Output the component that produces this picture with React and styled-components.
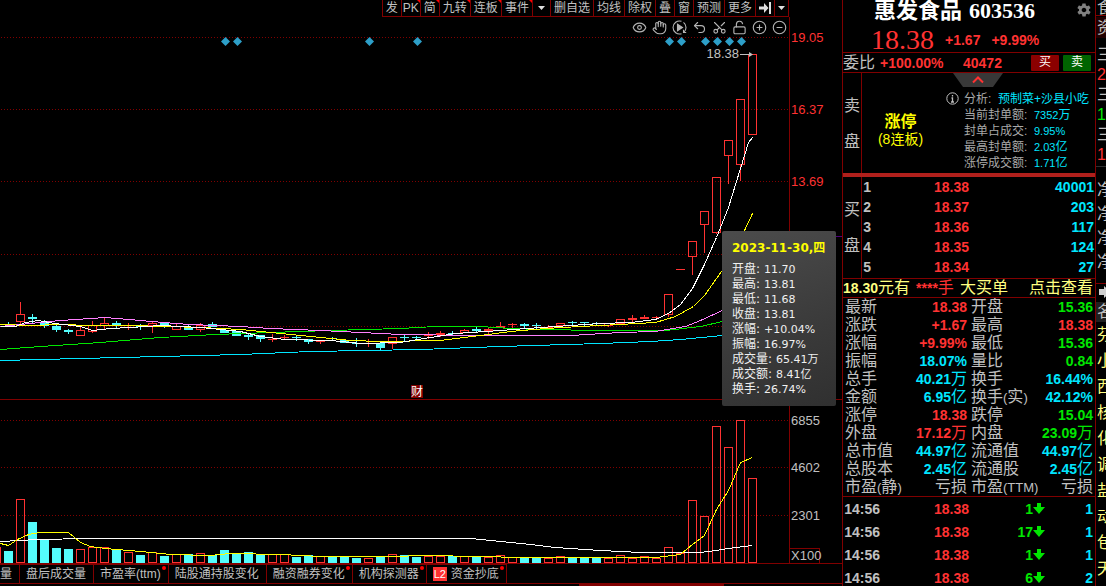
import React from 'react';
import styled, { createGlobalStyle } from 'styled-components';
import { Eye, Hand, Undo2, Scissors, LockOpen, CirclePlus, CircleMinus } from 'lucide-react';
import { IoMdSettings } from 'react-icons/io';

const RED = '#ff3232';
const GREEN = '#00e600';
const CYAN = '#00e6ff';
const AQUA = '#54fcfc';
const YELLOW = '#ffff00';
const PALE = '#ffff80';
const GRAY = '#c0c0c0';
const LINE = '#800000';

const GlobalStyle = createGlobalStyle`
    * {
        box-sizing: border-box;
    }
    body {
        margin: 0;
        background: #000;
        color: ${GRAY};
        font-family: 'Liberation Sans', 'Noto Sans CJK SC', sans-serif;
        font-size: 12px;
        overflow: hidden;
    }
    button {
        font-family: inherit;
        font-size: inherit;
        color: inherit;
        background: none;
        border: none;
        padding: 0;
        cursor: pointer;
    }
    table {
        border-collapse: collapse;
        table-layout: fixed;
        width: 100%;
    }
    th, td {
        padding: 0;
        font-weight: inherit;
        text-align: left;
        white-space: nowrap;
    }
`

const Page = styled.div`
    display: grid;
    grid-template-columns: 1fr 254px 10px;
    height: 100vh;
    overflow: hidden;
`

const Main = styled.main`
    display: flex;
    flex-direction: column;
    min-width: 0;
`

const Toolbar = styled.nav`
    display: flex;
    justify-content: flex-end;
    height: 17px;
    padding-right: 53px;
`

const ToolButton = styled.button`
    position: relative;
    display: flex;
    align-items: center;
    justify-content: center;
    min-width: ${props => props.$wide || 19}px;
    padding: 0 ${props => props.$tight ? 1 : 3}px;
    line-height: 14px;
    border-right: 1px solid ${LINE};
    border-bottom: 1px solid ${LINE};
    white-space: nowrap;
    &:first-child {
        border-left: 1px solid ${LINE};
    }
    &::after {
        content: '';
        display: ${props => props.$hot ? 'block' : 'none'};
        position: absolute;
        top: 0;
        right: 0;
        border-top: 3px solid #ff0000;
        border-left: 3px solid transparent;
    }
`

const ChartArea = styled.section`
    position: relative;
    svg.chart {
        display: block;
        width: 100%;
        height: auto;
    }
`

const ChartTools = styled.div`
    position: absolute;
    top: 0;
    right: 53px;
    display: flex;
    height: 20px;
`

const ChartTool = styled.button`
    display: flex;
    align-items: center;
    justify-content: center;
    width: 20px;
    color: #b4b4b4;
    .lucide-scissors {
        transform: rotate(-90deg);
    }
`

const Tooltip = styled.div`
    position: absolute;
    top: 214px;
    right: 6px;
    width: 114px;
    height: 175px;
    padding: 10px 0 0 10px;
    border-radius: 2px;
    background: linear-gradient(160deg, #4c4c4c, #3a3a3a 60%, #303030);
    color: #f0f0f0;
    font-family: 'DejaVu Sans', 'Noto Sans CJK SC', sans-serif;
    white-space: nowrap;
`

const TooltipTitle = styled.div`
    height: 21px;
    line-height: 14px;
    color: ${YELLOW};
    font-weight: bold;
`

const TooltipRow = styled.div`
    display: flex;
    gap: 4px;
    height: 15px;
    line-height: 15px;
    dt {
        font-size: 12px;
    }
    dd {
        margin: 0;
        font-size: 11px;
    }
`

const TooltipList = styled.dl`
    margin: 0;
`

const Tabs = styled.nav`
    display: flex;
    height: 21px;
    border-top: 1px solid ${LINE};
    border-bottom: 1px solid ${LINE};
`

const Tab = styled.button`
    position: relative;
    display: flex;
    align-items: center;
    gap: 4px;
    padding: 0 7px 0 ${props => props.$cut ? 0 : 6}px;
    line-height: 18px;
    border-top: 1px solid ${LINE};
    border-right: 1px solid ${LINE};
    white-space: nowrap;
    &::after {
        content: '';
        display: ${props => props.$dot ? 'block' : 'none'};
        position: absolute;
        top: 1px;
        right: 2px;
        width: 4px;
        height: 4px;
        border-radius: 50%;
        background: #ff0000;
    }
`

const Level2 = styled.span`
    width: 14px;
    height: 14px;
    line-height: 14px;
    background: ${RED};
    color: #fff;
    font-size: 11px;
    text-align: center;
`

const Strip = styled.div`
    width: 145px;
    height: 2px;
    margin: 0 118px 0 auto;
    background: ${LINE};
`

const Panel = styled.aside`
    border-left: 1px solid ${LINE};
    border-right: 1px solid ${LINE};
    overflow: hidden;
    min-height: 0;
`

const Head = styled.header`
    position: relative;
    height: 53px;
    padding: 0 28px;
    border-bottom: 1px solid ${LINE};
    white-space: nowrap;
`

const Name = styled.h1`
    display: flex;
    gap: 7px;
    height: 26px;
    margin: 0;
    padding-left: 3px;
    font: bold 22px/21px 'Liberation Serif', 'Noto Sans CJK SC', serif;
    color: #fff;
`

const Price = styled.div`
    display: flex;
    align-items: center;
    gap: 11px;
    height: 28px;
    color: ${RED};
    font-size: 14px;
    font-weight: bold;
    strong {
        font: 28px/26px 'Liberation Serif', serif;
    }
`

const Settings = styled.button`
    position: absolute;
    top: 2px;
    right: 3px;
    display: flex;
    color: #808080;
`

const Han = styled.span`
    font-size: 16px;
    font-weight: normal;
    line-height: 0;
`

const Commission = styled.div`
    display: flex;
    align-items: center;
    height: 20px;
    border-bottom: 1px solid ${LINE};
    color: ${RED};
    font-size: 14px;
    font-weight: bold;
    line-height: 18px;
`

const CommissionLabel = styled.span`
    width: 37px;
    color: ${GRAY};
`

const CommissionRate = styled.span`
    width: 83px;
`

const TradeButton = styled.button`
    width: 28px;
    height: 16px;
    margin-right: 4px;
    border-radius: 1px;
    background: ${props => props.$sell ? '#006400' : '#8b0000'};
    color: #fff;
    font-size: 12px;
    line-height: 15px;
    &:first-of-type {
        margin-left: auto;
    }
`

const Book = styled.section`
    display: grid;
    grid-template-columns: 19px 1fr;
    height: ${props => props.$height}px;
`

const Side = styled.div`
    display: flex;
    flex-direction: column;
    align-items: center;
    justify-content: center;
    gap: 20px;
    padding-top: 1px;
    border-right: 1px solid ${LINE};
    font-size: 16px;
    line-height: 16px;
`

const Sell = styled.div`
    position: relative;
    display: flex;
`

const Fold = styled.button`
    position: absolute;
    top: 0;
    left: 91px;
    display: flex;
`

const LimitUp = styled.div`
    width: 77px;
    padding-top: 40px;
    color: ${YELLOW};
    text-align: center;
    strong {
        display: block;
        font-size: 16px;
        line-height: 18px;
    }
    span {
        font-size: 14px;
        line-height: 17px;
    }
`

const InfoMark = styled.div`
    width: 25px;
    padding: 19px 0 0 7px;
`

const Analysis = styled.dl`
    margin: 0;
    padding-top: 18px;
    div {
        display: flex;
        height: 16px;
        line-height: 16px;
        white-space: nowrap;
    }
    dt {
        min-width: 34px;
        color: #a8a8a8;
    }
    dd {
        margin: 0;
        color: ${CYAN};
        font-size: 11px;
    }
    span {
        font-size: 12px;
    }
`

const WideLabel = styled.dt`
    width: 70px;
`

const Divider = styled.div`
    height: 4px;
    background: #b0201c;
`

const Data = styled.table`
    align-self: start;
    font-size: 14px;
    font-weight: bold;
    line-height: 16px;
    tr {
        height: ${props => props.$row}px;
    }
`

const Cell = styled.td`
    color: ${props => props.$color || GRAY};
    && {
        text-align: ${props => props.$right ? 'right' : 'left'};
        padding-right: ${props => props.$pad || 0}px;
    }
`

const Label = styled.th`
    && {
        padding: 2px 0 0 2px;
    }
    font-size: 13px;
    font-weight: normal;
`

const BigOrder = styled.div`
    display: flex;
    align-items: center;
    height: 20px;
    border-top: 1px solid ${LINE};
    border-bottom: 1px solid ${LINE};
    color: ${PALE};
    font-size: 14px;
    font-weight: bold;
    line-height: 18px;
    white-space: nowrap;
    em {
        margin: 0 6px;
        color: ${RED};
        font-style: normal;
    }
    button {
        margin-left: auto;
        padding-right: 2px;
    }
`

const Quote = styled.section`
    border-bottom: 1px solid ${LINE};
`

const Rail = styled.aside`
    overflow: hidden;
    font-size: 16px;
`

const RailGroup = styled.ul`
    list-style: none;
    margin: 0;
    padding: ${props => props.$pad || '0'};
    border-bottom: ${props => props.$line ? `1px solid ${props.$line}` : 'none'};
`

const RailItem = styled.li`
    width: 20px;
    height: ${props => props.$height}px;
    line-height: ${props => props.$height}px;
    padding-left: 1px;
    color: ${props => props.$color || GRAY};
    background: ${props => props.$back || 'none'};
`

const tools = [
    { text: '发' },
    { text: 'PK', hot: true, tight: true },
    { text: '简', hot: true },
    { text: '九转', hot: true },
    { text: '连板', hot: true },
    { text: '事件', hot: true },
    { icon: 'down', label: '事件列表', wide: 18 },
    { text: '删自选' },
    { text: '均线' },
    { text: '除权' },
    { text: '叠' },
    { text: '窗' },
    { text: '预测' },
    { text: '更多' },
    { icon: 'end', label: '移到最后' },
    { icon: 'down', label: '菜单', wide: 14 },
]

const tabs = [
    { text: '量', cut: true },
    { text: '盘后成交量' },
    { text: '市盈率(ttm)', dot: true },
    { text: '陆股通持股变化' },
    { text: '融资融券变化', dot: true },
    { text: '机构探测器', dot: true },
    { text: '资金抄底', dot: true, level2: true },
]

// up day, high, body top, body bottom, low, top of the volume bar
const candles = [
    [0, 322, 324, 325, 326, 551],
    [1, 302, 314, 321, 324, 499],
    [0, 314, 317, 319, 322, 522],
    [0, 320, 322, 326, 327, 540],
    [0, 324, 326, 330, 331, 548],
    [0, 329, 330, 332, 333, 549],
    [1, 327, 330, 335, 335, 549],
    [1, 321, 325, 331, 332, 547],
    [1, 318, 323, 325, 328, 547],
    [0, 321, 323, 326, 327, 550],
    [1, 323, 325, 325, 329, 552],
    [0, 324, 326, 327, 329, 555],
    [1, 321, 323, 325, 332, 552],
    [0, 323, 323, 326, 327, 556],
    [1, 324, 326, 329, 329, 554],
    [0, 325, 327, 330, 330, 554],
    [1, 323, 325, 329, 331, 553],
    [0, 322, 324, 327, 327, 555],
    [0, 328, 330, 333, 333, 550],
    [0, 331, 331, 336, 336, 553],
    [0, 333, 335, 337, 339, 552],
    [0, 335, 335, 339, 341, 555],
    [1, 334, 339, 339, 341, 554],
    [1, 335, 337, 337, 338, 554],
    [0, 335, 337, 338, 340, 557],
    [0, 339, 339, 342, 343, 555],
    [1, 340, 340, 341, 343, 556],
    [0, 337, 338, 339, 340, 557],
    [0, 340, 340, 343, 343, 557],
    [0, 338, 343, 344, 346, 558],
    [1, 339, 343, 343, 346, 558],
    [0, 341, 343, 348, 349, 557],
    [1, 337, 337, 343, 348, 554],
    [0, 335, 337, 338, 340, 555],
    [0, 336, 337, 338, 339, 557],
    [1, 332, 335, 335, 338, 556],
    [1, 331, 333, 334, 336, 556],
    [0, 331, 333, 334, 335, 556],
    [1, 329, 330, 332, 332, 556],
    [0, 327, 329, 331, 332, 557],
    [1, 328, 329, 330, 333, 557],
    [1, 322, 326, 327, 327, 555],
    [1, 323, 324, 324, 328, 557],
    [0, 323, 324, 326, 327, 558],
    [0, 323, 325, 326, 328, 558],
    [1, 325, 327, 327, 329, 558],
    [1, 323, 323, 325, 327, 556],
    [0, 321, 322, 323, 325, 558],
    [0, 322, 322, 323, 325, 558],
    [0, 322, 323, 324, 325, 558],
    [1, 323, 323, 325, 326, 558],
    [1, 319, 319, 323, 323, 555],
    [1, 315, 318, 319, 322, 558],
    [1, 315, 317, 318, 318, 556],
    [1, 316, 317, 317, 319, 558],
    [1, 294, 294, 314, 316, 547],
    [1, 269, 269, 269, 269, 553],
    [1, 241, 241, 256, 274, 500],
    [1, 211, 211, 224, 252, 516],
    [1, 177, 177, 232, 233, 426],
    [1, 140, 140, 155, 183, 447],
    [1, 99, 99, 164, 180, 420],
    [1, 54, 54, 134, 134, 478],
]

const averages = [
    ['#00e6ff', '0,360 80,358 160,356 240,354 310,351 420,349 500,346 600,343 650,341 680,339 722,335'],
    ['#00e600', '0,349 40,346 100,342 160,337 215,334 270,332 330,330 400,328 435,326 480,326 510,328 540,329 600,330 665,330 700,326 722,321'],
    ['#ff80ff', '0,326 30,323 60,320 105,317 140,320 175,323 190,324 240,326 270,328 320,330 360,332 400,334 470,335 570,335 620,332 655,331 685,326 700,320 722,310'],
    [YELLOW, '0,324 30,325 60,324 90,325 130,325 200,327 240,329 270,332 310,336 350,340 380,341 440,340 480,335 510,331 545,328 580,326 600,325 655,322 675,316 693,306 704,295 716,278 728,261 744,230 752,213'],
    ['#ffffff', '0,326 15,326 25,322 38,320 54,323 80,326 92,330 110,328 130,327 160,325 200,327 240,331 260,336 285,339 330,340 360,343 400,342 430,337 455,333 500,330 540,327 570,325 600,323 630,322 655,319 668,313 680,304 692,288 704,264 716,237 728,207 740,168 748,142 752,137'],
    ['#ffffff', '0,541 20,540 35,539 90,538 470,538 490,540 530,544 555,547 600,550 640,552 700,552 715,550 735,547 752,545'],
    [YELLOW, '0,543 8,545 17,539 28,534 40,532 68,532 80,542 90,546 105,548 140,551 170,554 210,555 230,553 280,554 320,556 390,556 425,555 480,556 520,557 655,557 680,554 692,544 704,535 716,509 728,490 740,462 752,457'],
]

const events = [225, 237, 369, 417, 669, 681, 705, 717, 729, 741]

const axis = [
    [38, '19.05', RED],
    [110, '16.37', RED],
    [182, '13.69', RED],
    [421, '6855', GRAY],
    [468, '4602', GRAY],
    [516, '2301', GRAY],
    [556, 'X100', GRAY],
]

const dayInfo = [
    ['开盘', '11.70'],
    ['最高', '13.81'],
    ['最低', '11.68'],
    ['收盘', '13.81'],
    ['涨幅', '+10.04%'],
    ['振幅', '16.97%'],
    ['成交量', '65.41万'],
    ['成交额', '8.41亿'],
    ['换手', '26.74%'],
]

const analysis = [
    ['当前封单额:', '7352万'],
    ['封单占成交:', '9.95%'],
    ['最高封单额:', '2.03亿'],
    ['涨停成交额:', '1.71亿'],
]

const bids = [
    ['1', '18.38', '40001'],
    ['2', '18.37', '203'],
    ['3', '18.36', '117'],
    ['4', '18.35', '124'],
    ['5', '18.34', '27'],
]

const quotes = [
    ['最新', '18.38', RED, '开盘', '15.36', GREEN],
    ['涨跌', '+1.67', RED, '最高', '18.38', RED],
    ['涨幅', '+9.99%', RED, '最低', '15.36', GREEN],
    ['振幅', '18.07%', CYAN, '量比', '0.84', GREEN],
    ['总手', '40.21万', CYAN, '换手', '16.44%', CYAN],
    ['金额', '6.95亿', CYAN, '换手(实)', '42.12%', CYAN],
    ['涨停', '18.38', RED, '跌停', '15.04', GREEN],
    ['外盘', '17.12万', RED, '内盘', '23.09万', GREEN],
    ['总市值', '44.97亿', CYAN, '流通值', '44.97亿', CYAN],
    ['总股本', '2.45亿', CYAN, '流通股', '2.45亿', CYAN],
    ['市盈(静)', '亏损', GRAY, '市盈(TTM)', '亏损', GRAY],
]

const ticks = [
    ['14:56', '18.38', '1', '1'],
    ['14:56', '18.38', '17', '1'],
    ['14:56', '18.38', '1', '1'],
    ['14:56', '18.38', '6', '2'],
]

// Chinese runs are set larger and lighter than the figures beside them
const Mixed = ({ children }) => children.split(/([\u4e00-\u9fff]+)/).map((part, i) => (
    i % 2 ? <Han key={i}>{part}</Han> : part
))

const ToolIcon = ({ name }) => name === 'down' ? (
    <svg width="7" height="4" viewBox="0 0 7 4"><path d="M0 0h7L3.5 4z" fill="#e0e0e0" /></svg>
) : (
    <svg width="12" height="12" viewBox="0 0 12 12"><path d="M0 4.500h5V1l4.500 5L5 11V7.500H0zM10 0h2v12h-2z" fill="#e0e0e0" /></svg>
)

const Replay = () => (
    <svg width="15" height="15" viewBox="0 0 15 15" fill="none" stroke="currentColor" strokeWidth="1.1">
        <path d="M9.500 1.300A6.500 6.500 0 1 0 9.500 13.700M11.500 2.400A6.500 6.500 0 0 1 12 12.200M11.500 9.800v2.700h2.700" />
        <path d="M5.500 4.200l5 3.300-5 3.300z" fill="currentColor" />
    </svg>
)

const Candle = ({ x, data }) => {
    const [up, high, top, bottom, low, volume] = data
    const color = up ? RED : AQUA

    return (
        <g stroke={color} fill={color}>
            {high < top && <path d={`M${x + 0.5} ${high}V${top}`} />}
            {low > bottom && <path d={`M${x + 0.5} ${bottom}V${low + 1}`} />}
            {up ? (
                <>
                    {top === bottom ? (
                        <path d={`M${x - 4} ${top + 0.5}h9`} />
                    ) : (
                        <rect x={x - 3.5} y={top + 0.5} width="8" height={bottom - top} fill="none" />
                    )}
                    <rect x={x - 3.5} y={volume + 0.5} width="8" height={562 - volume} fill="none" />
                </>
            ) : (
                <>
                    <rect x={x - 4} y={top} width="9" height={bottom - top} stroke="none" />
                    <rect x={x - 4} y={volume} width="9" height={563 - volume} stroke="none" />
                </>
            )}
        </g>
    )
}

const Chart = () => (
    <svg className="chart" viewBox="0 17 842 546" fontFamily="Liberation Sans, Noto Sans CJK SC, sans-serif" fontSize="13">
        <g shapeRendering="crispEdges" fill="none">
            {[37, 109, 181, 254, 326, 420, 467, 515].map(y => (
                <path key={y} d={`M1 ${y + 0.5}H789`} stroke={LINE} strokeDasharray="1 2" />
            ))}
            <path d="M789.500 17V563M0 399.500H842M789 548.500H819.500V563" stroke={LINE} />
            <path d="M836 236.500H842" stroke="#500080" />
            <path d="M0.500 547V563" stroke={RED} />
            {candles.map((data, i) => <Candle key={i} x={8 + i * 12} data={data} />)}
            <g transform="translate(0.5 0.5)">
                {averages.map(([color, points], i) => (
                    <polyline key={i} points={points} stroke={color} />
                ))}
            </g>
            <path d="M740 54.500H750" stroke={GRAY} />
        </g>
        <path d="M749 52l4 2.500-4 2.500z" fill={GRAY} />
        {events.map(x => (
            <path key={x} d={`M${x + 0.5} 37l4.500 4.500-4.500 4.500-4.500-4.500z`} fill="#2d9fc8" />
        ))}
        {axis.map(([y, text, color]) => (
            <text key={y} x="791" y={y + 4} fill={color}>{text}</text>
        ))}
        <text x="739" y="58" fill={GRAY} textAnchor="end">18.38</text>
        <rect x="411" y="385" width="12" height="13" fill={LINE} />
        <text x="417" y="396" fontSize="12" fill="#fff" textAnchor="middle">财</text>
    </svg>
)

const chartTools = [
    ['显示', Eye],
    ['拖动', Hand],
    ['回放', Replay],
    ['撤销', Undo2],
    ['剪切', Scissors],
    ['解锁', LockOpen],
    ['放大', CirclePlus],
    ['缩小', CircleMinus],
]

const App = () => {
    return (
        <Page>
            <GlobalStyle />
            <Main>
                <Toolbar>
                    {tools.map((tool, i) => (
                        <ToolButton key={i} $hot={tool.hot} $wide={tool.wide} $tight={tool.tight} aria-label={tool.label}>
                            {tool.text || <ToolIcon name={tool.icon} />}
                        </ToolButton>
                    ))}
                </Toolbar>
                <ChartArea>
                    <Chart />
                    <ChartTools>
                        {chartTools.map(([label, Icon]) => (
                            <ChartTool key={label} aria-label={label}><Icon size={15} strokeWidth={1.8} /></ChartTool>
                        ))}
                    </ChartTools>
                    <Tooltip>
                        <TooltipTitle>2023-11-30,四</TooltipTitle>
                        <TooltipList>
                            {dayInfo.map(([label, value]) => (
                                <TooltipRow key={label}>
                                    <dt>{label}:</dt>
                                    <dd>{value}</dd>
                                </TooltipRow>
                            ))}
                        </TooltipList>
                    </Tooltip>
                </ChartArea>
                <Tabs>
                    {tabs.map(tab => (
                        <Tab key={tab.text} $cut={tab.cut} $dot={tab.dot}>
                            {tab.level2 && <Level2>L2</Level2>}
                            {tab.text}
                        </Tab>
                    ))}
                </Tabs>
                <Strip />
            </Main>

            <Panel>
                <Head>
                    <Name><span>惠发食品</span><span>603536</span></Name>
                    <Price>
                        <strong>18.38</strong>
                        <span>+1.67</span>
                        <span>+9.99%</span>
                    </Price>
                    <Settings aria-label="设置"><IoMdSettings size={16} /></Settings>
                </Head>
                <Commission>
                    <CommissionLabel><Han>委比</Han></CommissionLabel>
                    <CommissionRate>+100.00%</CommissionRate>
                    <span>40472</span>
                    <TradeButton>买</TradeButton>
                    <TradeButton $sell>卖</TradeButton>
                </Commission>
                <Book $height={100}>
                    <Side><span>卖</span><span>盘</span></Side>
                    <Sell>
                        <Fold aria-label="收起">
                            <svg width="50" height="14" viewBox="0 0 50 14">
                                <path d="M0 0h50L40 14H10z" fill="#383838" />
                                <path d="M20 9.500l5-5 5 5" fill="none" stroke={RED} strokeWidth="2" />
                            </svg>
                        </Fold>
                        <LimitUp>
                            <strong>涨停</strong>
                            <span>(8连板)</span>
                        </LimitUp>
                        <InfoMark>
                            <svg width="13" height="13" viewBox="0 0 13 13" fill="none" stroke={GRAY}>
                                <circle cx="6.500" cy="6.500" r="5.700" />
                                <path d="M6.500 3v1.500M5.500 6h1v4M5 10h3" strokeWidth="1.300" />
                            </svg>
                        </InfoMark>
                        <Analysis>
                            <div><dt>分析:</dt><dd><span>预制菜+沙县小吃</span></dd></div>
                            {analysis.map(([label, value]) => (
                                <div key={label}>
                                    <WideLabel>{label}</WideLabel>
                                    <dd>{value.replace(/[万亿]/, '')}<span>{value.match(/[万亿]/)}</span></dd>
                                </div>
                            ))}
                        </Analysis>
                    </Sell>
                </Book>
                <Divider />
                <Book $height={101}>
                    <Side><span>买</span><span>盘</span></Side>
                    <Data $row={20}>
                        <colgroup>
                            <col width="20" />
                            <col width="88" />
                            <col />
                        </colgroup>
                        <tbody>
                            {bids.map(([level, price, volume]) => (
                                <tr key={level}>
                                    <Cell>&#8202;{level}</Cell>
                                    <Cell $right $color={RED} $pad={1}>{price}</Cell>
                                    <Cell $right $color={CYAN} $pad={1}>{volume}</Cell>
                                </tr>
                            ))}
                        </tbody>
                    </Data>
                </Book>
                <BigOrder>
                    <span><Mixed>18.30元有</Mixed></span>
                    <em><Mixed>****手</Mixed></em>
                    <Han>大买单</Han>
                    <button><Han>点击查看</Han></button>
                </BigOrder>
                <Quote>
                    <Data $row={18}>
                        <colgroup>
                            <col width="70" />
                            <col width="56" />
                            <col />
                            <col width="54" />
                        </colgroup>
                        <tbody>
                            {quotes.map(([left, a, colorA, right, b, colorB]) => (
                                <tr key={left}>
                                    <Label><Mixed>{left}</Mixed></Label>
                                    <Cell $right $color={colorA} $pad={2}><Mixed>{a}</Mixed></Cell>
                                    <Label><Mixed>{right}</Mixed></Label>
                                    <Cell $right $color={colorB} $pad={2}><Mixed>{b}</Mixed></Cell>
                                </tr>
                            ))}
                        </tbody>
                    </Data>
                </Quote>
                <Data $row={23}>
                    <colgroup>
                        <col width="63" />
                        <col width="63" />
                        <col width="76" />
                        <col />
                    </colgroup>
                    <tbody>
                        {ticks.map(([time, price, count, trades], i) => (
                            <tr key={i}>
                                <Cell>&#8202;{time}</Cell>
                                <Cell $right $color={RED}>{price}</Cell>
                                <Cell $right $color={GREEN}>
                                    {count}
                                    <svg width="12" height="11" viewBox="0 0 12 11">
                                        <path d="M4 0h4v4h4l-6 7-6-7h4z" fill={GREEN} />
                                    </svg>
                                </Cell>
                                <Cell $right $color={CYAN} $pad={2}>{trades}</Cell>
                            </tr>
                        ))}
                    </tbody>
                </Data>
            </Panel>

            <Rail>
                <RailGroup $line={LINE}>
                    <RailItem $height={15}>食</RailItem>
                </RailGroup>
                <RailGroup $pad="1px 0 7px">
                    <RailItem $height={21} $back="#200000">资</RailItem>
                </RailGroup>
                <RailGroup $pad="0 0 1px" $line="#303030">
                    <RailItem $height={20}>三</RailItem>
                    <RailItem $height={20} $color={RED}>2</RailItem>
                    <RailItem $height={20}>三</RailItem>
                    <RailItem $height={20} $color={GREEN}>1</RailItem>
                    <RailItem $height={20}>三</RailItem>
                    <RailItem $height={20} $color={RED}>1</RailItem>
                </RailGroup>
                <RailGroup $pad="11px 0 9px" $line={LINE}>
                    {[1, 2, 3, 4].map(n => <RailItem key={n} $height={24}>净</RailItem>)}
                </RailGroup>
                <RailGroup>
                    <RailItem $height={18}>
                        <svg width="14" height="12" viewBox="0 0 14 12"><path d="M2 3h5V0l7 6-7 6V9H2z" fill="#d0d0d0" /></svg>
                    </RailItem>
                    <RailItem $height={20} $back="#202020">名</RailItem>
                    {'芬小西核化调盐动包天'.split('').map(word => (
                        <RailItem key={word} $height={26} $color={PALE}>{word}</RailItem>
                    ))}
                </RailGroup>
            </Rail>
        </Page>
    )
}

export default App;
